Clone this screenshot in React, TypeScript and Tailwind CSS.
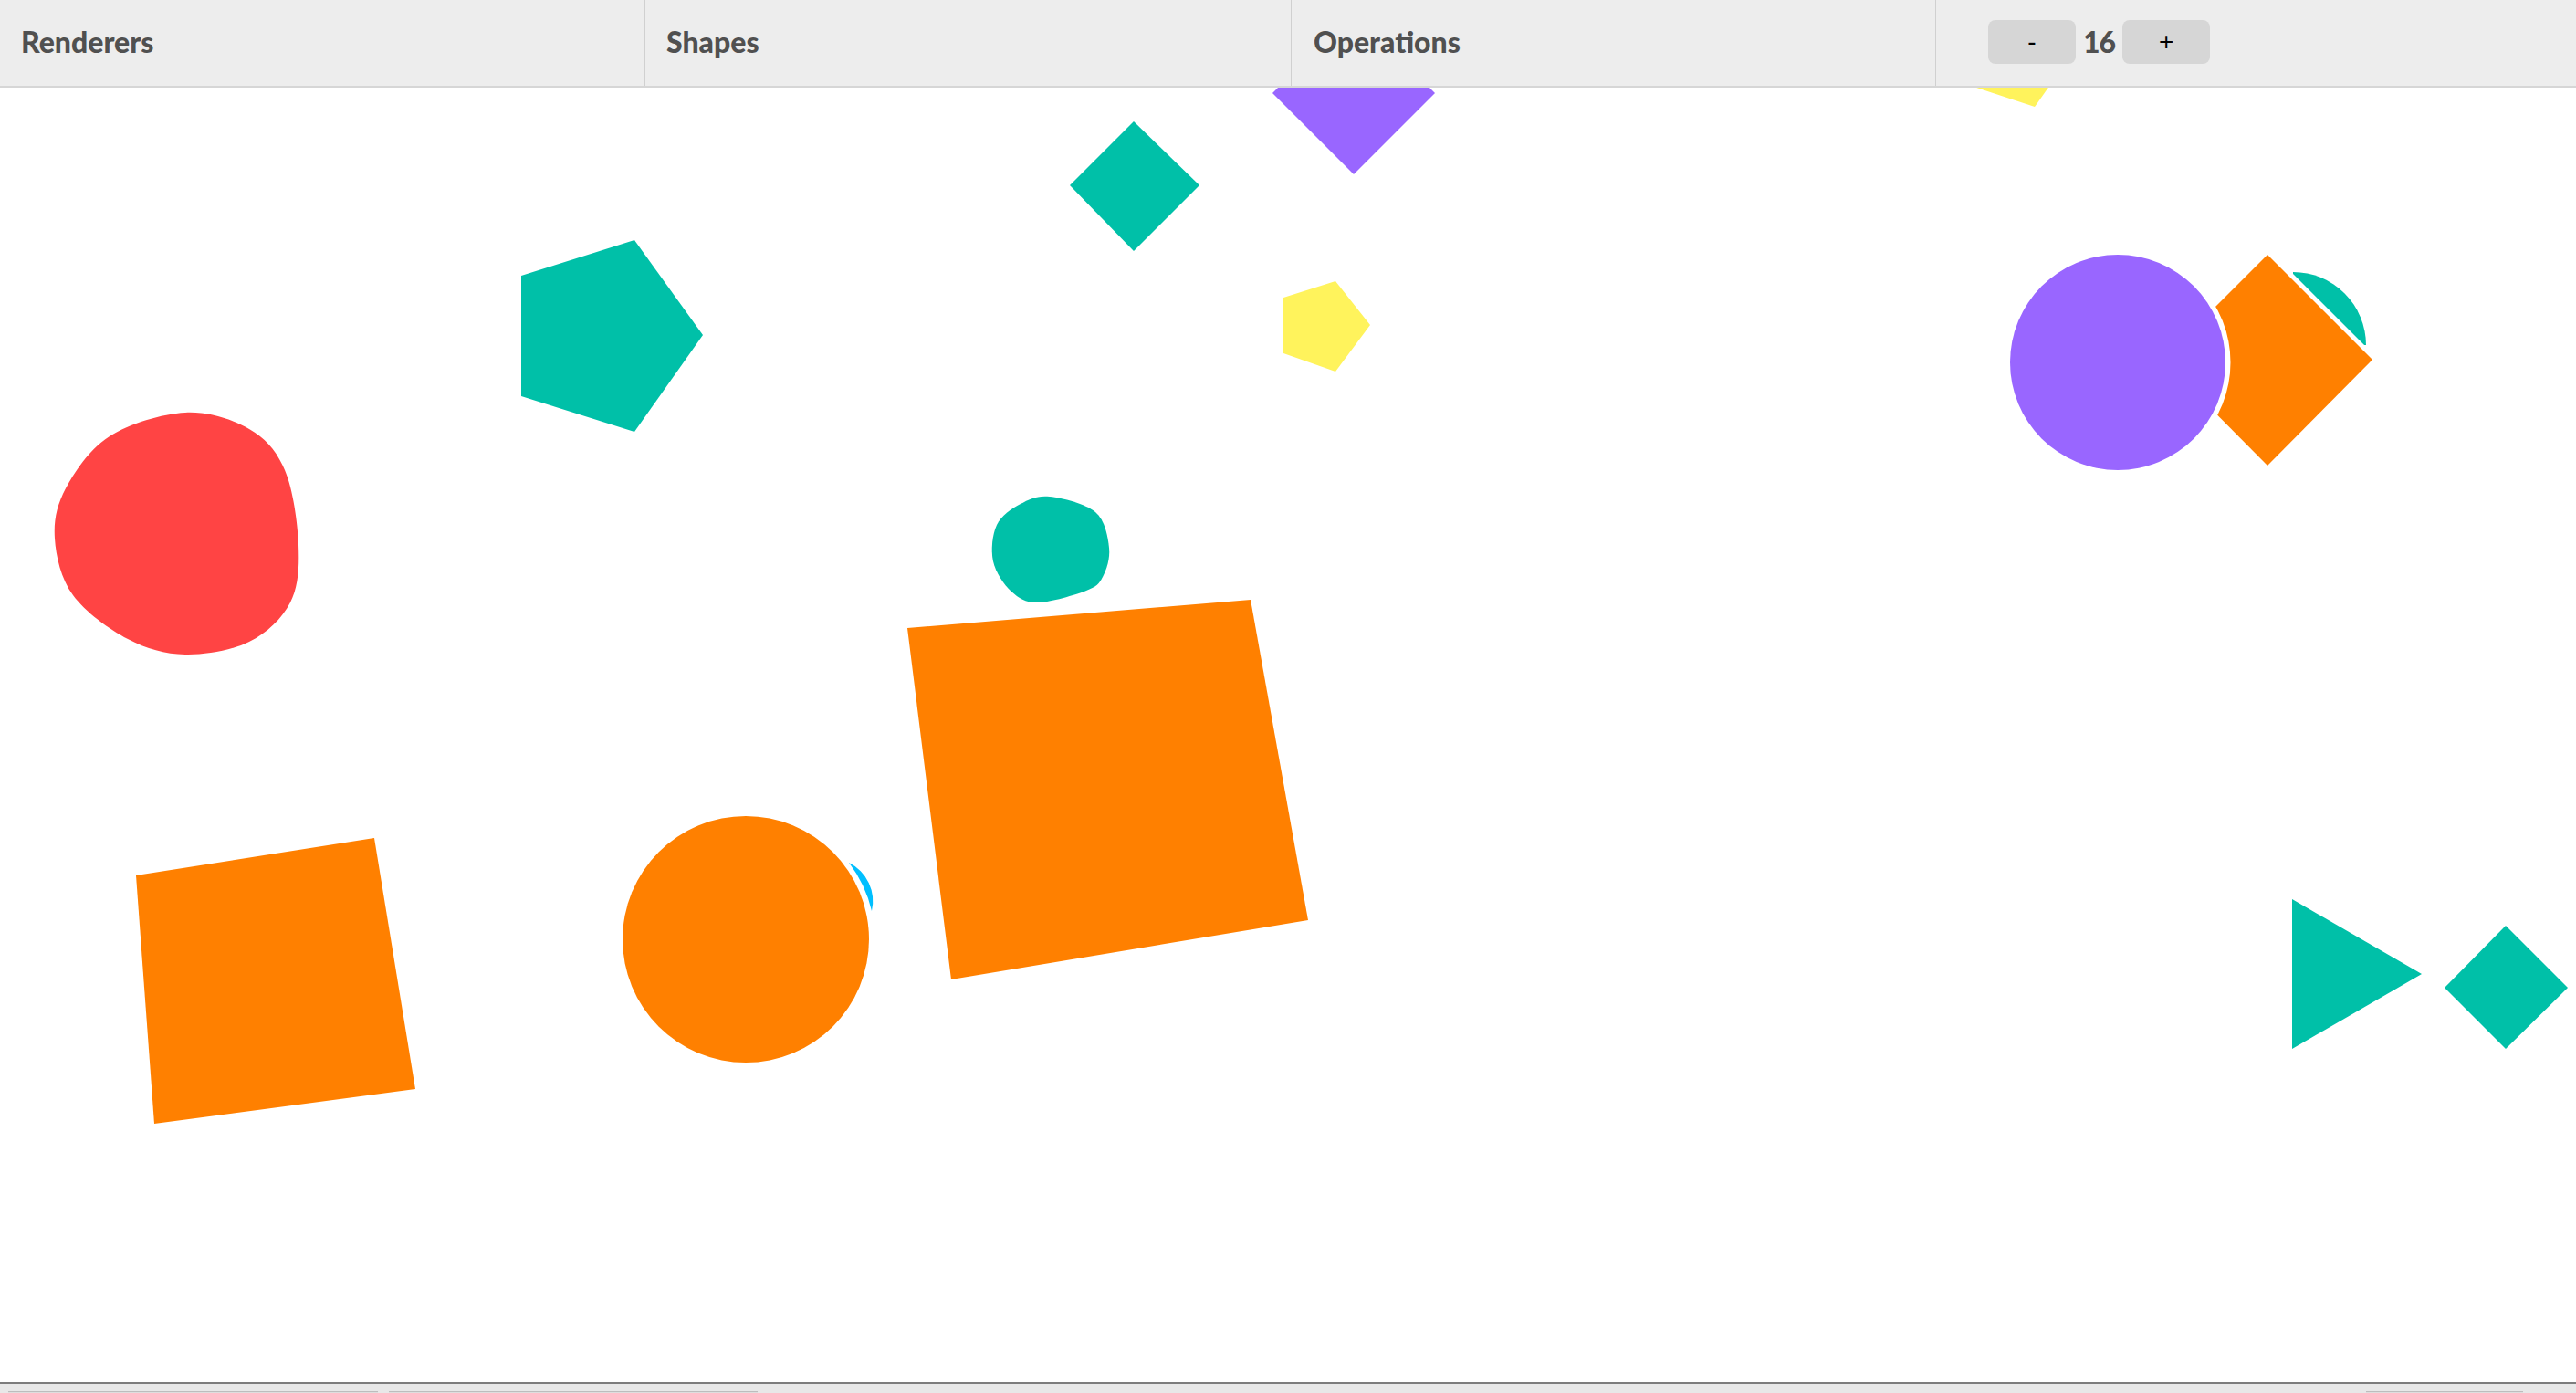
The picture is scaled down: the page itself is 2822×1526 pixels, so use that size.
import React from "react";

type P = [number, number];

function smooth(pts: P[]): string {
  const n = pts.length;
  let d = `M${pts[0][0]},${pts[0][1]}`;
  for (let i = 0; i < n; i++) {
    const p0 = pts[(i - 1 + n) % n];
    const p1 = pts[i];
    const p2 = pts[(i + 1) % n];
    const p3 = pts[(i + 2) % n];
    const c1: P = [p1[0] + (p2[0] - p0[0]) / 6, p1[1] + (p2[1] - p0[1]) / 6];
    const c2: P = [p2[0] - (p3[0] - p1[0]) / 6, p2[1] - (p3[1] - p1[1]) / 6];
    d += ` C${c1[0].toFixed(1)},${c1[1].toFixed(1)} ${c2[0].toFixed(1)},${c2[1].toFixed(1)} ${p2[0]},${p2[1]}`;
  }
  return d + " Z";
}

const poly = (pts: P[]) => pts.map((p) => p.join(",")).join(" ");

const TEAL = "#00c0a8";
const ORANGE = "#ff8000";
const PURPLE = "#9966ff";
const RED = "#ff4444";
const YELLOW = "#fff35c";
const BLUE = "#00bfff";

const redBlob: P[] = [
  [203, 452],
  [273, 470],
  [312, 515],
  [327, 597],
  [318, 660],
  [273, 703],
  [203, 717],
  [140, 700],
  [80, 652],
  [60, 590],
  [72, 535],
  [120, 478],
];

const tealBlob: P[] = [
  [1150, 544],
  [1200, 561],
  [1215, 600],
  [1208, 632],
  [1190, 647],
  [1137, 660],
  [1108, 648],
  [1088, 615],
  [1092, 575],
  [1118, 552],
];

function Canvas() {
  return (
    <svg
      className="block w-full h-full"
      viewBox="0 96 2822 1418"
      preserveAspectRatio="none"
    >
      <polygon
        points={poly([
          [2153, 92],
          [2229, 117],
          [2275, 52],
          [2228, -13],
          [2152, 11],
        ])}
        fill={YELLOW}
      />
      <polygon
        points={poly([
          [1394, 102],
          [1483, 13],
          [1572, 102],
          [1483, 191],
        ])}
        fill={PURPLE}
      />
      <polygon
        points={poly([
          [1172, 203],
          [1242, 133],
          [1314, 203],
          [1242, 275],
        ])}
        fill={TEAL}
      />
      <polygon
        points={poly([
          [571, 302],
          [695, 263],
          [770, 367],
          [695, 473],
          [571, 434],
        ])}
        fill={TEAL}
      />
      <polygon
        points={poly([
          [1406, 326],
          [1463, 308],
          [1501, 356],
          [1463, 407],
          [1406, 387],
        ])}
        fill={YELLOW}
      />
      <path d={smooth(redBlob)} fill={RED} />
      <path d={smooth(tealBlob)} fill={TEAL} />
      <polygon
        points={poly([
          [994, 688],
          [1370, 657],
          [1433, 1008],
          [1042, 1073],
        ])}
        fill={ORANGE}
      />
      <polygon
        points={poly([
          [149, 959],
          [410, 918],
          [455, 1193],
          [169, 1231],
        ])}
        fill={ORANGE}
      />
      <path
        d="M930,945 A47,47 0 0 1 955,998 A140,140 0 0 0 930,945 Z"
        fill={BLUE}
      />
      <circle cx={817} cy={1029} r={135} fill={ORANGE} />
      <path d="M2512,378 L2512,298 A80,80 0 0 1 2592,378 Z" fill={TEAL} />
      <polygon
        points={poly([
          [2484, 279],
          [2599, 394],
          [2484, 510],
          [2369, 394],
        ])}
        fill={ORANGE}
        stroke="#ffffff"
        strokeWidth={10}
        style={{ paintOrder: "stroke" }}
      />
      <ellipse
        cx={2320}
        cy={397}
        rx={118}
        ry={118}
        fill={PURPLE}
        stroke="#ffffff"
        strokeWidth={11}
        style={{ paintOrder: "stroke" }}
      />
      <polygon
        points={poly([
          [2511, 985],
          [2653, 1067],
          [2511, 1149],
        ])}
        fill={TEAL}
      />
      <polygon
        points={poly([
          [2678, 1082],
          [2745, 1014],
          [2813, 1082],
          [2745, 1149],
        ])}
        fill={TEAL}
      />
    </svg>
  );
}

export default function App() {
  const font = { fontFamily: "Lato, 'Open Sans', sans-serif" };
  return (
    <div className="w-[2822px] h-[1526px] flex flex-col overflow-hidden bg-white">
      <div
        className="h-[96px] shrink-0 grid grid-cols-[707px_708px_706px_1fr] bg-[#ededed] border-b-2 border-[#d6d6d6] text-[#505050]"
        style={font}
      >
        <div className="flex items-center pl-[23px] pb-[3px] border-r border-[#d0d0d0] text-[32px] font-black">
          Renderers
        </div>
        <div className="flex items-center pl-[23px] pb-[3px] border-r border-[#d0d0d0] text-[32px] font-black">
          Shapes
        </div>
        <div className="flex items-center pl-[24px] pb-[3px] border-r border-[#d0d0d0] text-[32px] font-black">
          Operations
        </div>
        <div className="flex items-center pl-[57px] pb-[2px]">
          <button
            className="w-[96px] h-[48px] rounded-[8px] bg-[#d6d6d6] text-black text-[28px] flex items-center justify-center"
            style={{ fontFamily: "'Liberation Sans', Arial, sans-serif" }}
          >
            -
          </button>
          <span className="mx-[8px] text-[32px] font-black tracking-[-1px]">16</span>
          <button
            className="w-[96px] h-[48px] rounded-[8px] bg-[#d6d6d6] text-black text-[28px] flex items-center justify-center"
            style={{ fontFamily: "'Liberation Sans', Arial, sans-serif" }}
          >
            +
          </button>
        </div>
      </div>
      <div className="flex-1 min-h-0 overflow-hidden">
        <Canvas />
      </div>
      <div className="h-[12px] shrink-0 border-t-2 border-[#7d7d7d] bg-[#e8e8e8] flex items-end">
        <div className="ml-[9px] w-[405px] h-[2px] border-t border-[#bdbdbd] bg-[#dedede]" />
        <div className="ml-[12px] w-[404px] h-[2px] border-t border-[#bdbdbd] bg-[#dedede]" />
        <div className="ml-auto mr-[58px] w-[172px] h-[2px] border-t border-[#bdbdbd] bg-[#dedede]" />
      </div>
    </div>
  );
}
